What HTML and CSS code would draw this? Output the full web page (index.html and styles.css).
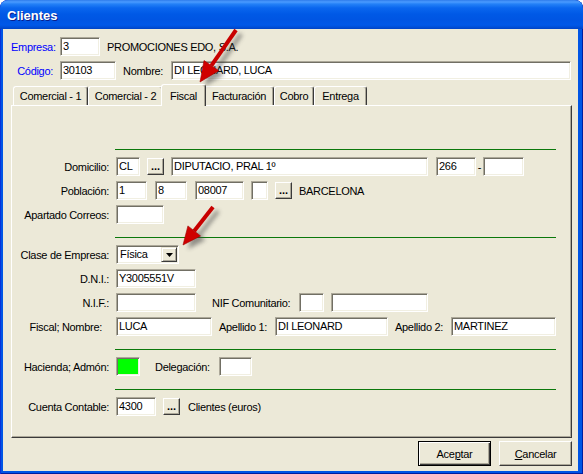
FILE: index.html
```html
<!DOCTYPE html>
<html lang="es">
<head>
<meta charset="utf-8">
<title>Clientes</title>
<link rel="stylesheet" href="styles.css">
</head>
<body>
<div class="window">
  <div class="titlebar"><span class="title">Clientes</span></div>
  <div class="client">
    <div class="head">
      <div class="hrow">
        <span class="hlabel">Empresa:</span>
        <div class="field w40">3</div>
        <span class="static">PROMOCIONES EDO, S.A.</span>
      </div>
      <div class="hrow">
        <span class="hlabel">Código:</span>
        <div class="field w56">30103</div>
        <span class="ilabel w41">Nombre:</span>
        <div class="field w400">DI LEONARD, LUCA</div>
      </div>
    </div>

    <div class="tabs">
      <div class="tab w75">Comercial - 1</div>
      <div class="tab w75">Comercial - 2</div>
      <div class="tab active">Fiscal</div>
      <div class="tab w70">Facturación</div>
      <div class="tab w40">Cobro</div>
      <div class="tab w53">Entrega</div>
    </div>

    <div class="panel">
      <section class="group">
        <div class="sep"></div>
        <div class="rows">
          <div class="row">
            <span class="label">Domicilio:</span>
            <div class="field w24">CL</div>
            <div class="dots">...</div>
            <div class="field w257">DIPUTACIO, PRAL 1º</div>
            <div class="field w40 ml1">266</div>
            <span class="dash">-</span>
            <div class="field w41"></div>
          </div>
          <div class="row">
            <span class="label">Población:</span>
            <div class="field w31">1</div>
            <div class="field w32 ml1">8</div>
            <div class="field w49 ml1">08007</div>
            <div class="field w17"></div>
            <div class="dots">...</div>
            <span class="static">BARCELONA</span>
          </div>
          <div class="row">
            <span class="label">Apartado Correos:</span>
            <div class="field w48"></div>
          </div>
        </div>
      </section>

      <section class="group">
        <div class="sep"></div>
        <div class="rows">
          <div class="row">
            <span class="label">Clase de Empresa:</span>
            <div class="field combo">
              <span class="combo-text">Física</span>
              <span class="drop"><svg width="7" height="4" viewBox="0 0 7 4"><polygon points="0,0 7,0 3.5,4" fill="#000"/></svg></span>
            </div>
          </div>
          <div class="row">
            <span class="label">D.N.I.:</span>
            <div class="field w80">Y3005551V</div>
          </div>
          <div class="row">
            <span class="label">N.I.F.:</span>
            <div class="field w80"></div>
            <span class="ilabel w80 ml9">NIF Comunitario:</span>
            <div class="field w25"></div>
            <div class="field w97"></div>
          </div>
          <div class="row">
            <span class="label pr7">Fiscal; Nombre:</span>
            <div class="field w96">LUCA</div>
            <span class="ilabel w49">Apellido 1:</span>
            <div class="field w113">DI LEONARD</div>
            <span class="ilabel w49">Apellido 2:</span>
            <div class="field w105">MARTINEZ</div>
          </div>
        </div>
      </section>

      <section class="group">
        <div class="sep"></div>
        <div class="rows">
          <div class="row">
            <span class="label">Hacienda; Admón:</span>
            <div class="field w24 green"></div>
            <span class="ilabel w57 ml8">Delegación:</span>
            <div class="field w33"></div>
          </div>
        </div>
      </section>

      <section class="group">
        <div class="sep"></div>
        <div class="rows">
          <div class="row">
            <span class="label">Cuenta Contable:</span>
            <div class="field w40">4300</div>
            <div class="dots">...</div>
            <span class="static ml1">Clientes (euros)</span>
          </div>
        </div>
      </section>
    </div>

    <div class="buttons">
      <button class="btn default" type="button">Ace<u>p</u>tar</button>
      <button class="btn" type="button"><u>C</u>ancelar</button>
    </div>
  </div>

  <svg class="marks" width="583" height="474" viewBox="0 0 583 474">
    <defs>
      <filter id="soft" x="-30%" y="-30%" width="160%" height="160%">
        <feGaussianBlur stdDeviation="2"/>
      </filter>
    </defs>
    <g filter="url(#soft)" opacity="0.55" transform="translate(5 4)">
      <line x1="236" y1="30" x2="211.4" y2="65.6" stroke="#444" stroke-width="4"/>
      <polygon points="200,82 218.8,70.7 204,60.5" fill="#444"/>
      <line x1="213" y1="207" x2="194.2" y2="230.9" stroke="#444" stroke-width="4"/>
      <polygon points="183,245 200.5,235.9 187.9,225.9" fill="#444"/>
    </g>
    <g>
      <line x1="236" y1="30" x2="211.4" y2="65.6" stroke="#C80000" stroke-width="4"/>
      <polygon points="200,82 218.8,70.7 204,60.5" fill="#D00000" stroke="#A00000" stroke-width="0.6"/>
      <line x1="213" y1="207" x2="194.2" y2="230.9" stroke="#C80000" stroke-width="4"/>
      <polygon points="183,245 200.5,235.9 187.9,225.9" fill="#D00000" stroke="#A00000" stroke-width="0.6"/>
    </g>
  </svg>
</div>
</body>
</html>
```

FILE: styles.css
```css
* {
  box-sizing: border-box;
}

html,
body {
  margin: 0;
  padding: 0;
  background: #ffffff;
}

body {
  font-family: "Liberation Sans", Arial, sans-serif;
  font-size: 11px;
  letter-spacing: -0.3px;
  color: #000000;
}

/* Window frame */
.window {
  position: relative;
  width: 583px;
  height: 474px;
  display: flex;
  flex-direction: column;
  background: #0055E5;
  border-radius: 8px 8px 0 0;
  overflow: hidden;
  box-shadow: inset 1px 0 #0831D9, inset -1px 0 #001EA0, inset 0 -1px #001EA0;
}

.titlebar {
  flex: none;
  height: 29px;
  display: flex;
  align-items: center;
  padding: 1px 0 0 7px;
  border-radius: 8px 8px 0 0;
  background: linear-gradient(180deg,
    #2E7CEB 0px, #4A9BFF 2px, #2481F7 4px, #0A66EE 8px,
    #0059E6 14px, #0055E3 20px, #0058E8 25px, #004FD9 27px, #0043C4 29px);
}

.title {
  color: #ffffff;
  font-family: "Liberation Sans", Arial, sans-serif;
  font-weight: bold;
  font-size: 13px;
  letter-spacing: 0;
  text-shadow: 1px 1px 0 #0A1E8C;
}

.client {
  flex: 1;
  margin: 0 5px 3px 3px;
  padding: 8px 6px 0 8px;
  background: #ECE9D8;
  display: flex;
  flex-direction: column;
}

/* Header rows above the tab control */
.head {
  display: flex;
  flex-direction: column;
  gap: 5px;
}

.hrow {
  display: flex;
  align-items: center;
  gap: 7px;
  height: 19px;
}

.hlabel {
  flex: none;
  width: 42px;
  text-align: right;
  color: #0000FF;
}

.ilabel {
  flex: none;
  white-space: nowrap;
}

.static {
  white-space: nowrap;
}

/* Sunken edit box */
.field {
  flex: none;
  height: 19px;
  padding: 0 1px 0 2px;
  background: #ffffff;
  border: 1px solid;
  border-color: #ACA899 #ffffff #ffffff #ACA899;
  box-shadow: inset 1px 1px 0 #716F64, inset -1px -1px 0 #F1EFE2;
  line-height: 17px;
  white-space: nowrap;
  overflow: hidden;
}

.green {
  background: #00FF00;
}

/* Widths used by fields and labels */
.w17 { width: 17px; }
.w24 { width: 24px; }
.w25 { width: 25px; }
.w31 { width: 31px; }
.w32 { width: 32px; }
.w33 { width: 33px; }
.w40 { width: 40px; }
.w41 { width: 41px; }
.w48 { width: 48px; }
.w49 { width: 49px; }
.w53 { width: 53px; }
.w56 { width: 56px; }
.w57 { width: 57px; }
.w70 { width: 70px; }
.w75 { width: 75px; }
.w80 { width: 80px; }
.w96 { width: 96px; }
.w97 { width: 97px; }
.w105 { width: 105px; }
.w113 { width: 113px; }
.w257 { width: 257px; }
.w400 { width: 400px; }

.ml1 { margin-left: 1px; }
.ml8 { margin-left: 8px; }
.ml9 { margin-left: 9px; }
.pr7 { padding-right: 7px; }

/* Tab strip */
.tabs {
  flex: none;
  display: flex;
  align-items: flex-end;
  height: 21px;
  margin-top: 4px;
  padding-left: 2px;
}

.tab {
  flex: none;
  height: 19px;
  padding-top: 1px;
  border-top: 1px solid #ffffff;
  border-left: 1px solid #ffffff;
  border-right: 1px solid #3A3A3A;
  box-shadow: inset -1px 0 0 #ACA899;
  border-radius: 3px 3px 0 0;
  background: #ECE9D8;
  text-align: center;
  line-height: 17px;
  white-space: nowrap;
}

.tab.active {
  position: relative;
  z-index: 1;
  width: 45px;
  height: 22px;
  margin: 0 -2px -1px;
  padding-top: 3px;
}

/* Tab page */
.panel {
  flex: none;
  height: 333px;
  padding-top: 43px;
  border: 1px solid;
  border-color: #ffffff #3A3A3A #3A3A3A #ffffff;
  box-shadow: inset -1px -1px 0 #ACA899;
}

.group + .group {
  margin-top: 13px;
}

.sep {
  width: 441px;
  height: 1px;
  margin: 0 0 7px 103px;
  background: #0B780B;
}

.rows {
  display: flex;
  flex-direction: column;
  gap: 5px;
}

.row {
  display: flex;
  align-items: center;
  gap: 7px;
  height: 19px;
}

.label {
  flex: none;
  width: 97px;
  text-align: right;
  white-space: nowrap;
}

.dash {
  width: 7px;
  margin: 0 -7px;
  text-align: center;
}

/* Small browse button */
.dots {
  flex: none;
  width: 17px;
  height: 17px;
  border: 1px solid;
  border-color: #ffffff #3A3A3A #3A3A3A #ffffff;
  box-shadow: inset -1px -1px 0 #ACA899;
  background: #ECE9D8;
  font-weight: bold;
  letter-spacing: 0;
  text-align: center;
  line-height: 15px;
}

/* Drop-down list */
.combo {
  width: 63px;
  padding: 1px;
  display: flex;
  justify-content: space-between;
  align-items: center;
}

.combo-text {
  padding-left: 2px;
  line-height: 15px;
}

.drop {
  width: 16px;
  height: 15px;
  display: flex;
  align-items: center;
  justify-content: center;
  background: #ECE9D8;
  border: 1px solid;
  border-color: #ECE9D8 #3A3A3A #3A3A3A #ECE9D8;
  box-shadow: inset 1px 1px 0 #ffffff, inset -1px -1px 0 #ACA899;
}

.drop svg {
  display: block;
}

/* Dialog buttons */
.buttons {
  flex: none;
  display: flex;
  justify-content: flex-end;
  gap: 8px;
  margin-top: 3px;
}

.btn {
  width: 73px;
  height: 25px;
  padding: 0;
  background: #ECE9D8;
  border: 1px solid;
  border-color: #ffffff #3A3A3A #3A3A3A #ffffff;
  box-shadow: inset -1px -1px 0 #ACA899;
  font-family: "Liberation Sans", Arial, sans-serif;
  font-size: 11px;
  letter-spacing: -0.3px;
  color: #000000;
  text-align: center;
}

.btn.default {
  border: 1px solid #000000;
  box-shadow: inset 1px 1px 0 #ffffff, inset -1px -1px 0 #3A3A3A, inset -2px -2px 0 #ACA899;
}

/* Annotation arrows over the dialog */
.marks {
  position: absolute;
  left: 0;
  top: 0;
  pointer-events: none;
}
```
